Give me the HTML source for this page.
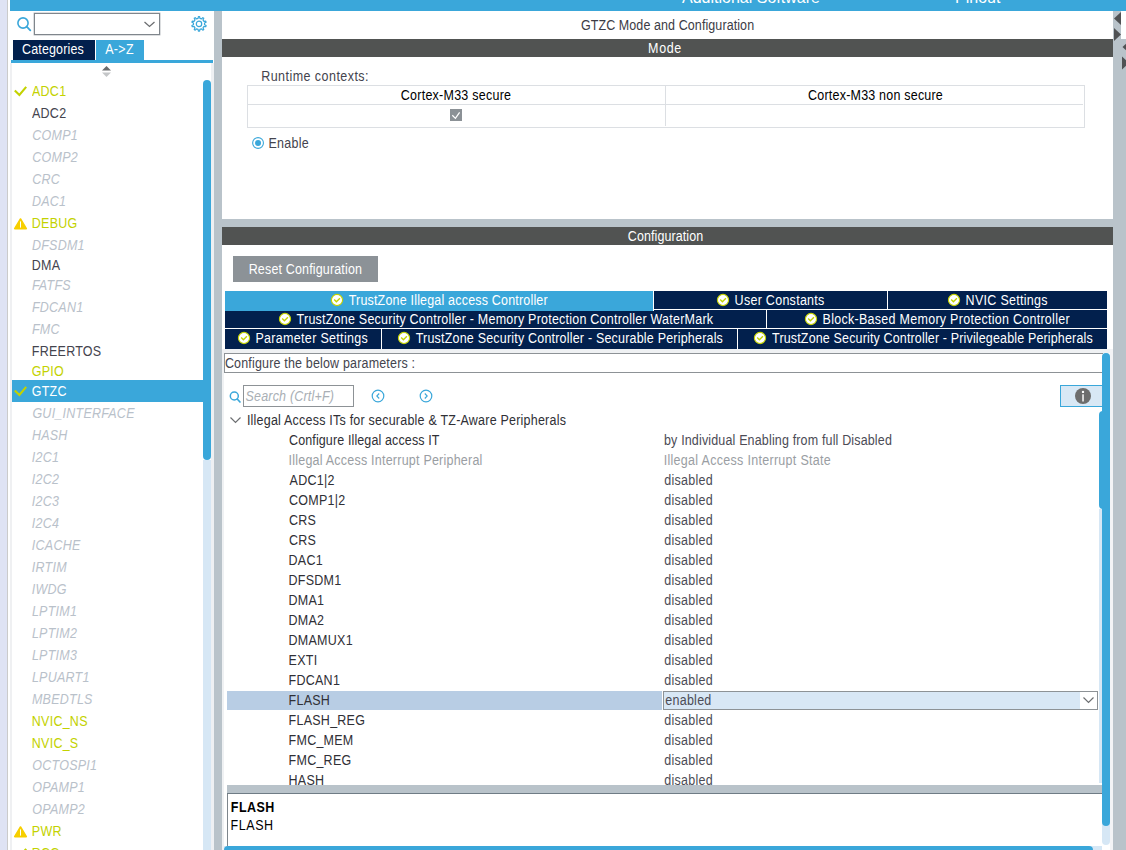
<!DOCTYPE html>
<html><head><meta charset="utf-8"><style>
html,body{margin:0;padding:0;}
body{width:1126px;height:850px;overflow:hidden;position:relative;background:#fff;font-family:"Liberation Sans", sans-serif;}
body div, body span, body svg{position:absolute;}
.t{white-space:nowrap;line-height:16px;}
</style></head><body>
<div style="left:0px;top:0px;width:7px;height:850px;background:#dfe3f4;"></div>
<div style="left:7px;top:0px;width:1px;height:850px;background:#cbcbcb;"></div>
<div style="left:10px;top:63px;width:2px;height:787px;background:#eff0f2;"></div>
<div style="left:10px;top:0px;width:1116px;height:11px;background:#3aa7da;"></div>
<div style="left:10px;top:0;width:1116px;height:11px;overflow:hidden;"><span class="t" style="left:672px;top:-10px;font-size:16px;color:#fff;">Additional Software</span><span class="t" style="left:945px;top:-10px;font-size:16px;color:#fff;">Pinout</span></div>
<svg style="left:14px;top:14px" width="20" height="20" viewBox="0 0 20 20"><circle cx="9" cy="9" r="5.1" fill="none" stroke="#3aa7da" stroke-width="1.6"/><line x1="12.7" y1="12.7" x2="16.3" y2="16.3" stroke="#3aa7da" stroke-width="1.8" stroke-linecap="round"/></svg>
<div style="left:34px;top:13px;width:124px;height:20px;border:1px solid #80868c;box-shadow:0 0 0 0.4px #a8adb2;background:#fff;"></div>
<svg style="left:143px;top:20px" width="13" height="9" viewBox="0 0 13 9"><polyline points="1.5,2 6.5,6.5 11.5,2" fill="none" stroke="#6d6f72" stroke-width="1.3"/></svg>
<svg style="left:189px;top:14px" width="20" height="20" viewBox="0 0 20 20"><path d="M9.09,4.37 L9.40,2.62 L10.60,2.62 L10.91,4.37 L12.51,4.89 L13.79,3.66 L14.76,4.36 L13.98,5.97 L14.97,7.33 L16.74,7.09 L17.10,8.22 L15.54,9.06 L15.54,10.74 L17.10,11.58 L16.74,12.71 L14.97,12.47 L13.98,13.83 L14.76,15.44 L13.79,16.14 L12.51,14.91 L10.91,15.43 L10.60,17.18 L9.40,17.18 L9.09,15.43 L7.49,14.91 L6.21,16.14 L5.24,15.44 L6.02,13.83 L5.03,12.47 L3.26,12.71 L2.90,11.58 L4.46,10.74 L4.46,9.06 L2.90,8.22 L3.26,7.09 L5.03,7.33 L6.02,5.97 L5.24,4.36 L6.21,3.66 L7.49,4.89 Z" fill="none" stroke="#3aa7da" stroke-width="1.2" stroke-linejoin="round"/><circle cx="10" cy="9.9" r="2.7" fill="none" stroke="#3aa7da" stroke-width="1.2"/></svg>
<div style="left:13px;top:40px;width:82px;height:20px;background:#02204d;"></div>
<div style="left:96px;top:40px;width:48px;height:20px;background:#3aa7da;"></div>
<span class="t" style="left:22.10px;top:42px;font-size:12.5px;letter-spacing:0.133px;transform:scaleY(1.097);transform-origin:0 12px;color:#fff;">Categories</span>
<span class="t" style="left:105.20px;top:42px;font-size:12.5px;letter-spacing:0.300px;transform:scaleY(1.097);transform-origin:0 12px;color:#fff;">A-&gt;Z</span>
<div style="left:11px;top:60px;width:202px;height:3px;background:#3aa7da;"></div>
<div style="left:211px;top:63px;width:3px;height:787px;background:#eef0f3;"></div>
<svg style="left:101px;top:65px" width="11" height="13" viewBox="0 0 11 13"><polygon points="5.5,1 10,5.5 1,5.5" fill="#6a6c6e"/><polygon points="5.5,12 10,7.5 1,7.5" fill="#c4c6c8"/></svg>
<div style="left:203px;top:460px;width:8px;height:390px;background:#d6e7f5;"></div>
<div style="left:203px;top:80px;width:8px;height:380px;background:#3aa7da;border-radius:4px;"></div>
<div style="left:12px;top:380px;width:191px;height:22px;background:#3aa7da;"></div>
<span class="t" style="left:32.00px;top:84px;font-size:12.5px;letter-spacing:0.250px;transform:scaleY(1.097);transform-origin:0 12px;color:#c3d200;">ADC1</span>
<svg style="left:13px;top:85px" width="15" height="13" viewBox="0 0 15 13"><polyline points="1.8,5.4 6.4,10.0 13.2,1.8" fill="none" stroke="#c3d200" stroke-width="2.1"/></svg>
<span class="t" style="left:32.00px;top:106px;font-size:12.5px;letter-spacing:0.250px;transform:scaleY(1.097);transform-origin:0 12px;color:#44444e;">ADC2</span>
<span class="t" style="left:32.30px;top:128px;font-size:12.5px;letter-spacing:0.250px;transform:scaleY(1.097);transform-origin:0 12px;color:#b9c1ca;font-style:italic;">COMP1</span>
<span class="t" style="left:32.30px;top:150px;font-size:12.5px;letter-spacing:0.250px;transform:scaleY(1.097);transform-origin:0 12px;color:#b9c1ca;font-style:italic;">COMP2</span>
<span class="t" style="left:32.30px;top:172px;font-size:12.5px;letter-spacing:0.250px;transform:scaleY(1.097);transform-origin:0 12px;color:#b9c1ca;font-style:italic;">CRC</span>
<span class="t" style="left:31.90px;top:194px;font-size:12.5px;letter-spacing:0.250px;transform:scaleY(1.097);transform-origin:0 12px;color:#b9c1ca;font-style:italic;">DAC1</span>
<span class="t" style="left:31.80px;top:216px;font-size:12.5px;letter-spacing:0.250px;transform:scaleY(1.097);transform-origin:0 12px;color:#c3d200;">DEBUG</span>
<svg style="left:13px;top:216px" width="15" height="15" viewBox="0 0 15 15"><path d="M7.5 3 L13.3 12.6 L1.7 12.6 Z" fill="#f7cf00" stroke="#f7cf00" stroke-width="1.6" stroke-linejoin="round"/><rect x="7" y="5.4" width="1" height="6.2" fill="#fff"/></svg>
<span class="t" style="left:31.90px;top:238px;font-size:12.5px;letter-spacing:0.250px;transform:scaleY(1.097);transform-origin:0 12px;color:#b9c1ca;font-style:italic;">DFSDM1</span>
<span class="t" style="left:31.80px;top:258px;font-size:12.5px;letter-spacing:0.250px;transform:scaleY(1.097);transform-origin:0 12px;color:#44444e;">DMA</span>
<span class="t" style="left:31.90px;top:278px;font-size:12.5px;letter-spacing:0.250px;transform:scaleY(1.097);transform-origin:0 12px;color:#b9c1ca;font-style:italic;">FATFS</span>
<span class="t" style="left:31.90px;top:300px;font-size:12.5px;letter-spacing:0.250px;transform:scaleY(1.097);transform-origin:0 12px;color:#b9c1ca;font-style:italic;">FDCAN1</span>
<span class="t" style="left:31.90px;top:322px;font-size:12.5px;letter-spacing:0.250px;transform:scaleY(1.097);transform-origin:0 12px;color:#b9c1ca;font-style:italic;">FMC</span>
<span class="t" style="left:31.80px;top:344px;font-size:12.5px;letter-spacing:0.250px;transform:scaleY(1.097);transform-origin:0 12px;color:#44444e;">FREERTOS</span>
<span class="t" style="left:31.70px;top:364px;font-size:12.5px;letter-spacing:0.250px;transform:scaleY(1.097);transform-origin:0 12px;color:#c3d200;">GPIO</span>
<span class="t" style="left:31.70px;top:384px;font-size:12.5px;letter-spacing:0.250px;transform:scaleY(1.097);transform-origin:0 12px;color:#fff;">GTZC</span>
<svg style="left:13px;top:385px" width="15" height="13" viewBox="0 0 15 13"><polyline points="1.8,5.4 6.4,10.0 13.2,1.8" fill="none" stroke="#c3d200" stroke-width="2.1"/></svg>
<span class="t" style="left:32.40px;top:406px;font-size:12.5px;letter-spacing:0.250px;transform:scaleY(1.097);transform-origin:0 12px;color:#b9c1ca;font-style:italic;">GUI_INTERFACE</span>
<span class="t" style="left:31.90px;top:428px;font-size:12.5px;letter-spacing:0.250px;transform:scaleY(1.097);transform-origin:0 12px;color:#b9c1ca;font-style:italic;">HASH</span>
<span class="t" style="left:31.80px;top:450px;font-size:12.5px;letter-spacing:0.250px;transform:scaleY(1.097);transform-origin:0 12px;color:#b9c1ca;font-style:italic;">I2C1</span>
<span class="t" style="left:31.80px;top:472px;font-size:12.5px;letter-spacing:0.250px;transform:scaleY(1.097);transform-origin:0 12px;color:#b9c1ca;font-style:italic;">I2C2</span>
<span class="t" style="left:31.80px;top:494px;font-size:12.5px;letter-spacing:0.250px;transform:scaleY(1.097);transform-origin:0 12px;color:#b9c1ca;font-style:italic;">I2C3</span>
<span class="t" style="left:31.80px;top:516px;font-size:12.5px;letter-spacing:0.250px;transform:scaleY(1.097);transform-origin:0 12px;color:#b9c1ca;font-style:italic;">I2C4</span>
<span class="t" style="left:31.80px;top:538px;font-size:12.5px;letter-spacing:0.250px;transform:scaleY(1.097);transform-origin:0 12px;color:#b9c1ca;font-style:italic;">ICACHE</span>
<span class="t" style="left:31.80px;top:560px;font-size:12.5px;letter-spacing:0.250px;transform:scaleY(1.097);transform-origin:0 12px;color:#b9c1ca;font-style:italic;">IRTIM</span>
<span class="t" style="left:31.80px;top:582px;font-size:12.5px;letter-spacing:0.250px;transform:scaleY(1.097);transform-origin:0 12px;color:#b9c1ca;font-style:italic;">IWDG</span>
<span class="t" style="left:31.90px;top:604px;font-size:12.5px;letter-spacing:0.250px;transform:scaleY(1.097);transform-origin:0 12px;color:#b9c1ca;font-style:italic;">LPTIM1</span>
<span class="t" style="left:31.90px;top:626px;font-size:12.5px;letter-spacing:0.250px;transform:scaleY(1.097);transform-origin:0 12px;color:#b9c1ca;font-style:italic;">LPTIM2</span>
<span class="t" style="left:31.90px;top:648px;font-size:12.5px;letter-spacing:0.250px;transform:scaleY(1.097);transform-origin:0 12px;color:#b9c1ca;font-style:italic;">LPTIM3</span>
<span class="t" style="left:31.90px;top:670px;font-size:12.5px;letter-spacing:0.250px;transform:scaleY(1.097);transform-origin:0 12px;color:#b9c1ca;font-style:italic;">LPUART1</span>
<span class="t" style="left:31.90px;top:692px;font-size:12.5px;letter-spacing:0.250px;transform:scaleY(1.097);transform-origin:0 12px;color:#b9c1ca;font-style:italic;">MBEDTLS</span>
<span class="t" style="left:31.80px;top:714px;font-size:12.5px;letter-spacing:0.250px;transform:scaleY(1.097);transform-origin:0 12px;color:#c3d200;">NVIC_NS</span>
<span class="t" style="left:31.80px;top:736px;font-size:12.5px;letter-spacing:0.250px;transform:scaleY(1.097);transform-origin:0 12px;color:#c3d200;">NVIC_S</span>
<span class="t" style="left:32.30px;top:758px;font-size:12.5px;letter-spacing:0.250px;transform:scaleY(1.097);transform-origin:0 12px;color:#b9c1ca;font-style:italic;">OCTOSPI1</span>
<span class="t" style="left:32.30px;top:780px;font-size:12.5px;letter-spacing:0.250px;transform:scaleY(1.097);transform-origin:0 12px;color:#b9c1ca;font-style:italic;">OPAMP1</span>
<span class="t" style="left:32.30px;top:802px;font-size:12.5px;letter-spacing:0.250px;transform:scaleY(1.097);transform-origin:0 12px;color:#b9c1ca;font-style:italic;">OPAMP2</span>
<span class="t" style="left:31.80px;top:824px;font-size:12.5px;letter-spacing:0.250px;transform:scaleY(1.097);transform-origin:0 12px;color:#c3d200;">PWR</span>
<svg style="left:13px;top:824px" width="15" height="15" viewBox="0 0 15 15"><path d="M7.5 3 L13.3 12.6 L1.7 12.6 Z" fill="#f7cf00" stroke="#f7cf00" stroke-width="1.6" stroke-linejoin="round"/><rect x="7" y="5.4" width="1" height="6.2" fill="#fff"/></svg>
<span class="t" style="left:31.80px;top:846px;font-size:12.5px;letter-spacing:0.250px;transform:scaleY(1.097);transform-origin:0 12px;color:#c3d200;">RCC</span>
<svg style="left:13px;top:847px" width="15" height="13" viewBox="0 0 15 13"><polyline points="1.8,5.4 6.4,10.0 13.2,1.8" fill="none" stroke="#c3d200" stroke-width="2.1"/></svg>
<div style="left:214px;top:11px;width:8px;height:839px;background:#b9c3ca;"></div>
<div style="left:1113px;top:11px;width:13px;height:839px;background:#b9c3ca;"></div>
<div style="left:1121px;top:11px;width:5px;height:28px;background:#fff;"></div>
<svg style="left:1113px;top:11px" width="13" height="60" viewBox="0 0 13 60"><polygon points="8,1 8,14 1,7.5" fill="#505254"/><polygon points="1,17 8,23.5 1,30" fill="#505254"/><polygon points="16.5,29.5 16.5,42.5 9.5,36" fill="#505254"/><polygon points="9,45.5 16,52 9,58.5" fill="#505254"/></svg>
<span class="t" style="left:580.90px;top:18px;font-size:12.5px;letter-spacing:0.088px;transform:scaleY(1.097);transform-origin:0 12px;color:#3c3c46;">GTZC Mode and Configuration</span>
<div style="left:222px;top:39px;width:891px;height:18px;background:#515352;"></div>
<span class="t" style="left:648.10px;top:41px;font-size:12.5px;letter-spacing:0.633px;transform:scaleY(1.097);transform-origin:0 12px;color:#fff;">Mode</span>
<span class="t" style="left:261.20px;top:69px;font-size:12.5px;letter-spacing:0.456px;transform:scaleY(1.097);transform-origin:0 12px;color:#44444e;">Runtime contexts:</span>
<div style="left:247px;top:85px;width:836px;height:41px;border:1px solid #dcdfe3;"></div>
<div style="left:248px;top:104px;width:835px;height:1px;background:#dcdfe3;"></div>
<div style="left:665px;top:86px;width:1px;height:40px;background:#dcdfe3;"></div>
<span class="t" style="left:400.80px;top:88px;font-size:12.5px;letter-spacing:0.244px;transform:scaleY(1.097);transform-origin:0 12px;color:#000;">Cortex-M33 secure</span>
<span class="t" style="left:808.10px;top:88px;font-size:12.5px;letter-spacing:0.205px;transform:scaleY(1.097);transform-origin:0 12px;color:#000;">Cortex-M33 non secure</span>
<svg style="left:450px;top:109px" width="12" height="12" viewBox="0 0 12 12"><rect width="12" height="12" fill="#8b9196"/><polyline points="2.3,6.3 5.4,9.4 9.6,3.3" fill="none" stroke="#fff" stroke-width="1.25"/></svg>
<svg style="left:251px;top:136px" width="14" height="14" viewBox="0 0 14 14"><circle cx="7.05" cy="7" r="5.4" fill="#fff" stroke="#3aa7da" stroke-width="1.1"/><circle cx="7.05" cy="7" r="3" fill="#3aa7da"/></svg>
<span class="t" style="left:268.40px;top:136px;font-size:12.5px;letter-spacing:0.300px;transform:scaleY(1.097);transform-origin:0 12px;color:#44444e;">Enable</span>
<div style="left:222px;top:219px;width:891px;height:8px;background:#b9c3ca;"></div>
<div style="left:222px;top:227px;width:891px;height:18px;background:#515352;"></div>
<span class="t" style="left:627.80px;top:229px;font-size:12.5px;letter-spacing:0.083px;transform:scaleY(1.097);transform-origin:0 12px;color:#fff;">Configuration</span>
<div style="left:233px;top:256px;width:145px;height:26px;background:#8c9297;"></div>
<span class="t" style="left:248.70px;top:262px;font-size:12.5px;letter-spacing:0.156px;transform:scaleY(1.097);transform-origin:0 12px;color:#fff;">Reset Configuration</span>
<div style="left:225px;top:291px;width:882px;height:58px;background:#fff;"></div>
<div style="left:225px;top:291px;width:428px;height:20px;background:#3aa7da;"></div>
<div style="left:654px;top:291px;width:233px;height:18px;background:#02204d;"></div>
<div style="left:888px;top:291px;width:219px;height:18px;background:#02204d;"></div>
<div style="left:225px;top:311px;width:882px;height:17px;background:#02204d;"></div>
<div style="left:654px;top:310px;width:453px;height:1px;background:#02204d;"></div>
<div style="left:766px;top:310px;width:1px;height:18px;background:#fff;"></div>
<div style="left:225px;top:329px;width:882px;height:20px;background:#02204d;"></div>
<div style="left:381px;top:329px;width:1px;height:20px;background:#fff;"></div>
<div style="left:737px;top:329px;width:1px;height:20px;background:#fff;"></div>
<svg style="left:330px;top:293px" width="14" height="14" viewBox="0 0 14 14"><circle cx="7" cy="7" r="5.6" fill="#fff" stroke="#c3d200" stroke-width="1.15"/><polyline points="4.2,6.6 6.4,8.8 9.9,5.3" fill="none" stroke="#c3d200" stroke-width="1.35"/></svg>
<span class="t" style="left:348.70px;top:293px;font-size:12.5px;letter-spacing:0.185px;transform:scaleY(1.097);transform-origin:0 12px;color:#fff;">TrustZone Illegal access Controller</span>
<svg style="left:716px;top:293px" width="14" height="14" viewBox="0 0 14 14"><circle cx="7" cy="7" r="5.6" fill="#fff" stroke="#c3d200" stroke-width="1.15"/><polyline points="4.2,6.6 6.4,8.8 9.9,5.3" fill="none" stroke="#c3d200" stroke-width="1.35"/></svg>
<span class="t" style="left:734.60px;top:293px;font-size:12.5px;letter-spacing:0.277px;transform:scaleY(1.097);transform-origin:0 12px;color:#fff;">User Constants</span>
<svg style="left:947px;top:293px" width="14" height="14" viewBox="0 0 14 14"><circle cx="7" cy="7" r="5.6" fill="#fff" stroke="#c3d200" stroke-width="1.15"/><polyline points="4.2,6.6 6.4,8.8 9.9,5.3" fill="none" stroke="#c3d200" stroke-width="1.35"/></svg>
<span class="t" style="left:965.60px;top:293px;font-size:12.5px;letter-spacing:0.292px;transform:scaleY(1.097);transform-origin:0 12px;color:#fff;">NVIC Settings</span>
<svg style="left:278px;top:312px" width="14" height="14" viewBox="0 0 14 14"><circle cx="7" cy="7" r="5.6" fill="#fff" stroke="#c3d200" stroke-width="1.15"/><polyline points="4.2,6.6 6.4,8.8 9.9,5.3" fill="none" stroke="#c3d200" stroke-width="1.35"/></svg>
<span class="t" style="left:296.60px;top:312px;font-size:12.5px;letter-spacing:0.230px;transform:scaleY(1.097);transform-origin:0 12px;color:#fff;">TrustZone Security Controller - Memory Protection Controller WaterMark</span>
<svg style="left:804px;top:312px" width="14" height="14" viewBox="0 0 14 14"><circle cx="7" cy="7" r="5.6" fill="#fff" stroke="#c3d200" stroke-width="1.15"/><polyline points="4.2,6.6 6.4,8.8 9.9,5.3" fill="none" stroke="#c3d200" stroke-width="1.35"/></svg>
<span class="t" style="left:822.60px;top:312px;font-size:12.5px;letter-spacing:0.277px;transform:scaleY(1.097);transform-origin:0 12px;color:#fff;">Block-Based Memory Protection Controller</span>
<svg style="left:237px;top:331px" width="14" height="14" viewBox="0 0 14 14"><circle cx="7" cy="7" r="5.6" fill="#fff" stroke="#c3d200" stroke-width="1.15"/><polyline points="4.2,6.6 6.4,8.8 9.9,5.3" fill="none" stroke="#c3d200" stroke-width="1.35"/></svg>
<span class="t" style="left:255.40px;top:331px;font-size:12.5px;letter-spacing:0.318px;transform:scaleY(1.097);transform-origin:0 12px;color:#fff;">Parameter Settings</span>
<svg style="left:397px;top:331px" width="14" height="14" viewBox="0 0 14 14"><circle cx="7" cy="7" r="5.6" fill="#fff" stroke="#c3d200" stroke-width="1.15"/><polyline points="4.2,6.6 6.4,8.8 9.9,5.3" fill="none" stroke="#c3d200" stroke-width="1.35"/></svg>
<span class="t" style="left:415.70px;top:331px;font-size:12.5px;letter-spacing:0.198px;transform:scaleY(1.097);transform-origin:0 12px;color:#fff;">TrustZone Security Controller - Securable Peripherals</span>
<svg style="left:753px;top:331px" width="14" height="14" viewBox="0 0 14 14"><circle cx="7" cy="7" r="5.6" fill="#fff" stroke="#c3d200" stroke-width="1.15"/><polyline points="4.2,6.6 6.4,8.8 9.9,5.3" fill="none" stroke="#c3d200" stroke-width="1.35"/></svg>
<span class="t" style="left:772.10px;top:331px;font-size:12.5px;letter-spacing:0.150px;transform:scaleY(1.097);transform-origin:0 12px;color:#fff;">TrustZone Security Controller - Privilegeable Peripherals</span>
<div style="left:222px;top:349px;width:888px;height:4px;background:#eff1f3;"></div>
<div style="left:222px;top:349px;width:2px;height:501px;background:#eff1f3;"></div>
<div style="left:224px;top:353px;width:878px;height:18px;border:1px solid #8d9296;border-right:none;background:#fff;"></div>
<span class="t" style="left:224.90px;top:356px;font-size:12.5px;letter-spacing:0.171px;transform:scaleY(1.097);transform-origin:0 12px;color:#44444e;">Configure the below parameters :</span>
<svg style="left:228px;top:389px" width="14" height="15" viewBox="0 0 14 15"><circle cx="6.3" cy="7" r="4" fill="none" stroke="#3aa7da" stroke-width="1.5"/><line x1="9.2" y1="10" x2="12" y2="13" stroke="#3aa7da" stroke-width="1.7" stroke-linecap="round"/></svg>
<div style="left:243px;top:385px;width:109px;height:20px;border:1px solid #8d9296;background:#fff;"></div>
<span class="t" style="left:245.50px;top:389px;font-size:12.5px;letter-spacing:0.193px;transform:scaleY(1.097);transform-origin:0 12px;color:#a9afb5;font-style:italic;">Search (Crtl+F)</span>
<svg style="left:370.7px;top:389px" width="14" height="14" viewBox="0 0 14 14"><circle cx="7" cy="7" r="5.8" fill="none" stroke="#3aa7da" stroke-width="1.2"/><polyline points="8.2,4.5 5.8,7 8.2,9.5" fill="none" stroke="#3aa7da" stroke-width="1.1"/></svg>
<svg style="left:418.5px;top:389px" width="14" height="14" viewBox="0 0 14 14"><circle cx="7" cy="7" r="5.8" fill="none" stroke="#3aa7da" stroke-width="1.2"/><polyline points="5.8,4.5 8.2,7 5.8,9.5" fill="none" stroke="#3aa7da" stroke-width="1.1"/></svg>
<div style="left:1060px;top:385px;width:41px;height:20px;border:1px solid #3aa7da;border-right:none;background:#d8e8f5;"></div>
<svg style="left:1074px;top:387px" width="18" height="18" viewBox="0 0 18 18"><circle cx="9" cy="9" r="8" fill="#6d6d6d"/><circle cx="9" cy="4.9" r="1.2" fill="#fff"/><rect x="8.3" y="7.3" width="1.45" height="7.2" fill="#fff"/></svg>
<svg style="left:229px;top:415px" width="14" height="10" viewBox="0 0 14 10"><polyline points="1.5,2.5 6.5,7.5 11.5,2.5" fill="none" stroke="#6d6f72" stroke-width="1.2"/></svg>
<span class="t" style="left:246.90px;top:413px;font-size:12.5px;letter-spacing:0.217px;transform:scaleY(1.097);transform-origin:0 12px;color:#303036;">Illegal Access ITs for securable &amp; TZ-Aware Peripherals</span>
<div style="left:227px;top:691px;width:435px;height:19px;background:#b8cde4;"></div>
<div style="left:222px;top:411px;width:880px;height:374px;overflow:hidden;">
<span class="t" style="left:67.00px;top:22px;font-size:12.5px;letter-spacing:0.123px;transform:scaleY(1.097);transform-origin:0 12px;color:#303036;">Configure Illegal access IT</span>
<span class="t" style="left:442.00px;top:22px;font-size:12.5px;letter-spacing:0.155px;transform:scaleY(1.097);transform-origin:0 12px;color:#4c4c56;">by Individual Enabling from full Disabled</span>
<span class="t" style="left:66.50px;top:42px;font-size:12.5px;letter-spacing:0.226px;transform:scaleY(1.097);transform-origin:0 12px;color:#9a9ea3;">Illegal Access Interrupt Peripheral</span>
<span class="t" style="left:441.70px;top:42px;font-size:12.5px;letter-spacing:0.300px;transform:scaleY(1.097);transform-origin:0 12px;color:#9a9ea3;">Illegal Access Interrupt State</span>
<span class="t" style="left:67.60px;top:62px;font-size:12.5px;letter-spacing:0.250px;transform:scaleY(1.097);transform-origin:0 12px;color:#303036;">ADC1|2</span>
<span class="t" style="left:442.30px;top:62px;font-size:12.5px;letter-spacing:0.250px;transform:scaleY(1.097);transform-origin:0 12px;color:#4c4c56;">disabled</span>
<span class="t" style="left:67.00px;top:82px;font-size:12.5px;letter-spacing:0.250px;transform:scaleY(1.097);transform-origin:0 12px;color:#303036;">COMP1|2</span>
<span class="t" style="left:442.30px;top:82px;font-size:12.5px;letter-spacing:0.250px;transform:scaleY(1.097);transform-origin:0 12px;color:#4c4c56;">disabled</span>
<span class="t" style="left:67.00px;top:102px;font-size:12.5px;letter-spacing:0.250px;transform:scaleY(1.097);transform-origin:0 12px;color:#303036;">CRS</span>
<span class="t" style="left:442.30px;top:102px;font-size:12.5px;letter-spacing:0.250px;transform:scaleY(1.097);transform-origin:0 12px;color:#4c4c56;">disabled</span>
<span class="t" style="left:67.00px;top:122px;font-size:12.5px;letter-spacing:0.250px;transform:scaleY(1.097);transform-origin:0 12px;color:#303036;">CRS</span>
<span class="t" style="left:442.30px;top:122px;font-size:12.5px;letter-spacing:0.250px;transform:scaleY(1.097);transform-origin:0 12px;color:#4c4c56;">disabled</span>
<span class="t" style="left:66.60px;top:142px;font-size:12.5px;letter-spacing:0.250px;transform:scaleY(1.097);transform-origin:0 12px;color:#303036;">DAC1</span>
<span class="t" style="left:442.30px;top:142px;font-size:12.5px;letter-spacing:0.250px;transform:scaleY(1.097);transform-origin:0 12px;color:#4c4c56;">disabled</span>
<span class="t" style="left:66.60px;top:162px;font-size:12.5px;letter-spacing:0.250px;transform:scaleY(1.097);transform-origin:0 12px;color:#303036;">DFSDM1</span>
<span class="t" style="left:442.30px;top:162px;font-size:12.5px;letter-spacing:0.250px;transform:scaleY(1.097);transform-origin:0 12px;color:#4c4c56;">disabled</span>
<span class="t" style="left:66.60px;top:182px;font-size:12.5px;letter-spacing:0.250px;transform:scaleY(1.097);transform-origin:0 12px;color:#303036;">DMA1</span>
<span class="t" style="left:442.30px;top:182px;font-size:12.5px;letter-spacing:0.250px;transform:scaleY(1.097);transform-origin:0 12px;color:#4c4c56;">disabled</span>
<span class="t" style="left:66.60px;top:202px;font-size:12.5px;letter-spacing:0.250px;transform:scaleY(1.097);transform-origin:0 12px;color:#303036;">DMA2</span>
<span class="t" style="left:442.30px;top:202px;font-size:12.5px;letter-spacing:0.250px;transform:scaleY(1.097);transform-origin:0 12px;color:#4c4c56;">disabled</span>
<span class="t" style="left:66.60px;top:222px;font-size:12.5px;letter-spacing:0.250px;transform:scaleY(1.097);transform-origin:0 12px;color:#303036;">DMAMUX1</span>
<span class="t" style="left:442.30px;top:222px;font-size:12.5px;letter-spacing:0.250px;transform:scaleY(1.097);transform-origin:0 12px;color:#4c4c56;">disabled</span>
<span class="t" style="left:66.60px;top:242px;font-size:12.5px;letter-spacing:0.250px;transform:scaleY(1.097);transform-origin:0 12px;color:#303036;">EXTI</span>
<span class="t" style="left:442.30px;top:242px;font-size:12.5px;letter-spacing:0.250px;transform:scaleY(1.097);transform-origin:0 12px;color:#4c4c56;">disabled</span>
<span class="t" style="left:66.60px;top:262px;font-size:12.5px;letter-spacing:0.250px;transform:scaleY(1.097);transform-origin:0 12px;color:#303036;">FDCAN1</span>
<span class="t" style="left:442.30px;top:262px;font-size:12.5px;letter-spacing:0.250px;transform:scaleY(1.097);transform-origin:0 12px;color:#4c4c56;">disabled</span>
<div style="left:441px;top:280px;width:433px;height:17px;border:1px solid #8d9296;background:#d8e7f5;"></div>
<div style="left:858px;top:281px;width:17px;height:17px;background:#fff;"></div>
<svg style="left:860px;top:284px" width="14" height="10" viewBox="0 0 14 10"><polyline points="1.5,2.5 6.5,7.5 11.5,2.5" fill="none" stroke="#6d6f72" stroke-width="1.2"/></svg>
<span class="t" style="left:66.60px;top:282px;font-size:12.5px;letter-spacing:0.250px;transform:scaleY(1.097);transform-origin:0 12px;color:#303036;">FLASH</span>
<span class="t" style="left:443.30px;top:282px;font-size:12.5px;letter-spacing:0.250px;transform:scaleY(1.097);transform-origin:0 12px;color:#4c4c56;">enabled</span>
<span class="t" style="left:66.60px;top:302px;font-size:12.5px;letter-spacing:0.250px;transform:scaleY(1.097);transform-origin:0 12px;color:#303036;">FLASH_REG</span>
<span class="t" style="left:442.30px;top:302px;font-size:12.5px;letter-spacing:0.250px;transform:scaleY(1.097);transform-origin:0 12px;color:#4c4c56;">disabled</span>
<span class="t" style="left:66.60px;top:322px;font-size:12.5px;letter-spacing:0.250px;transform:scaleY(1.097);transform-origin:0 12px;color:#303036;">FMC_MEM</span>
<span class="t" style="left:442.30px;top:322px;font-size:12.5px;letter-spacing:0.250px;transform:scaleY(1.097);transform-origin:0 12px;color:#4c4c56;">disabled</span>
<span class="t" style="left:66.60px;top:342px;font-size:12.5px;letter-spacing:0.250px;transform:scaleY(1.097);transform-origin:0 12px;color:#303036;">FMC_REG</span>
<span class="t" style="left:442.30px;top:342px;font-size:12.5px;letter-spacing:0.250px;transform:scaleY(1.097);transform-origin:0 12px;color:#4c4c56;">disabled</span>
<span class="t" style="left:66.60px;top:362px;font-size:12.5px;letter-spacing:0.250px;transform:scaleY(1.097);transform-origin:0 12px;color:#303036;">HASH</span>
<span class="t" style="left:442.30px;top:362px;font-size:12.5px;letter-spacing:0.250px;transform:scaleY(1.097);transform-origin:0 12px;color:#4c4c56;">disabled</span>
</div>
<div style="left:227px;top:785px;width:875px;height:8px;background:#b9c3ca;"></div>
<div style="left:227px;top:793px;width:875px;height:1px;background:#6f7c85;"></div>
<div style="left:227px;top:794px;width:874px;height:52px;border-left:1px solid #7e868c;background:#fff;"></div>
<span class="t" style="left:230.80px;top:800px;font-size:12.5px;letter-spacing:0.450px;transform:scaleY(1.097);transform-origin:0 12px;color:#000;font-weight:bold;">FLASH</span>
<span class="t" style="left:230.60px;top:818px;font-size:12.5px;letter-spacing:0.550px;transform:scaleY(1.097);transform-origin:0 12px;color:#000;">FLASH</span>
<div style="left:224px;top:846px;width:878px;height:4px;background:#d6e7f5;"></div>
<div style="left:224px;top:846px;width:869px;height:8px;background:#3aa7da;border-radius:4px;"></div>
<div style="left:1110px;top:349px;width:3px;height:501px;background:#f3f4f6;"></div>
<div style="left:1099px;top:509px;width:3px;height:274px;background:#d6e7f5;"></div>
<div style="left:1099px;top:411px;width:8px;height:98px;background:#3aa7da;border-radius:4px;"></div>
<div style="left:1102px;top:353px;width:8px;height:492px;background:#d6e7f5;border-radius:4px;"></div>
<div style="left:1102px;top:353px;width:8px;height:473px;background:#3aa7da;border-radius:4px;"></div>
</body></html>
